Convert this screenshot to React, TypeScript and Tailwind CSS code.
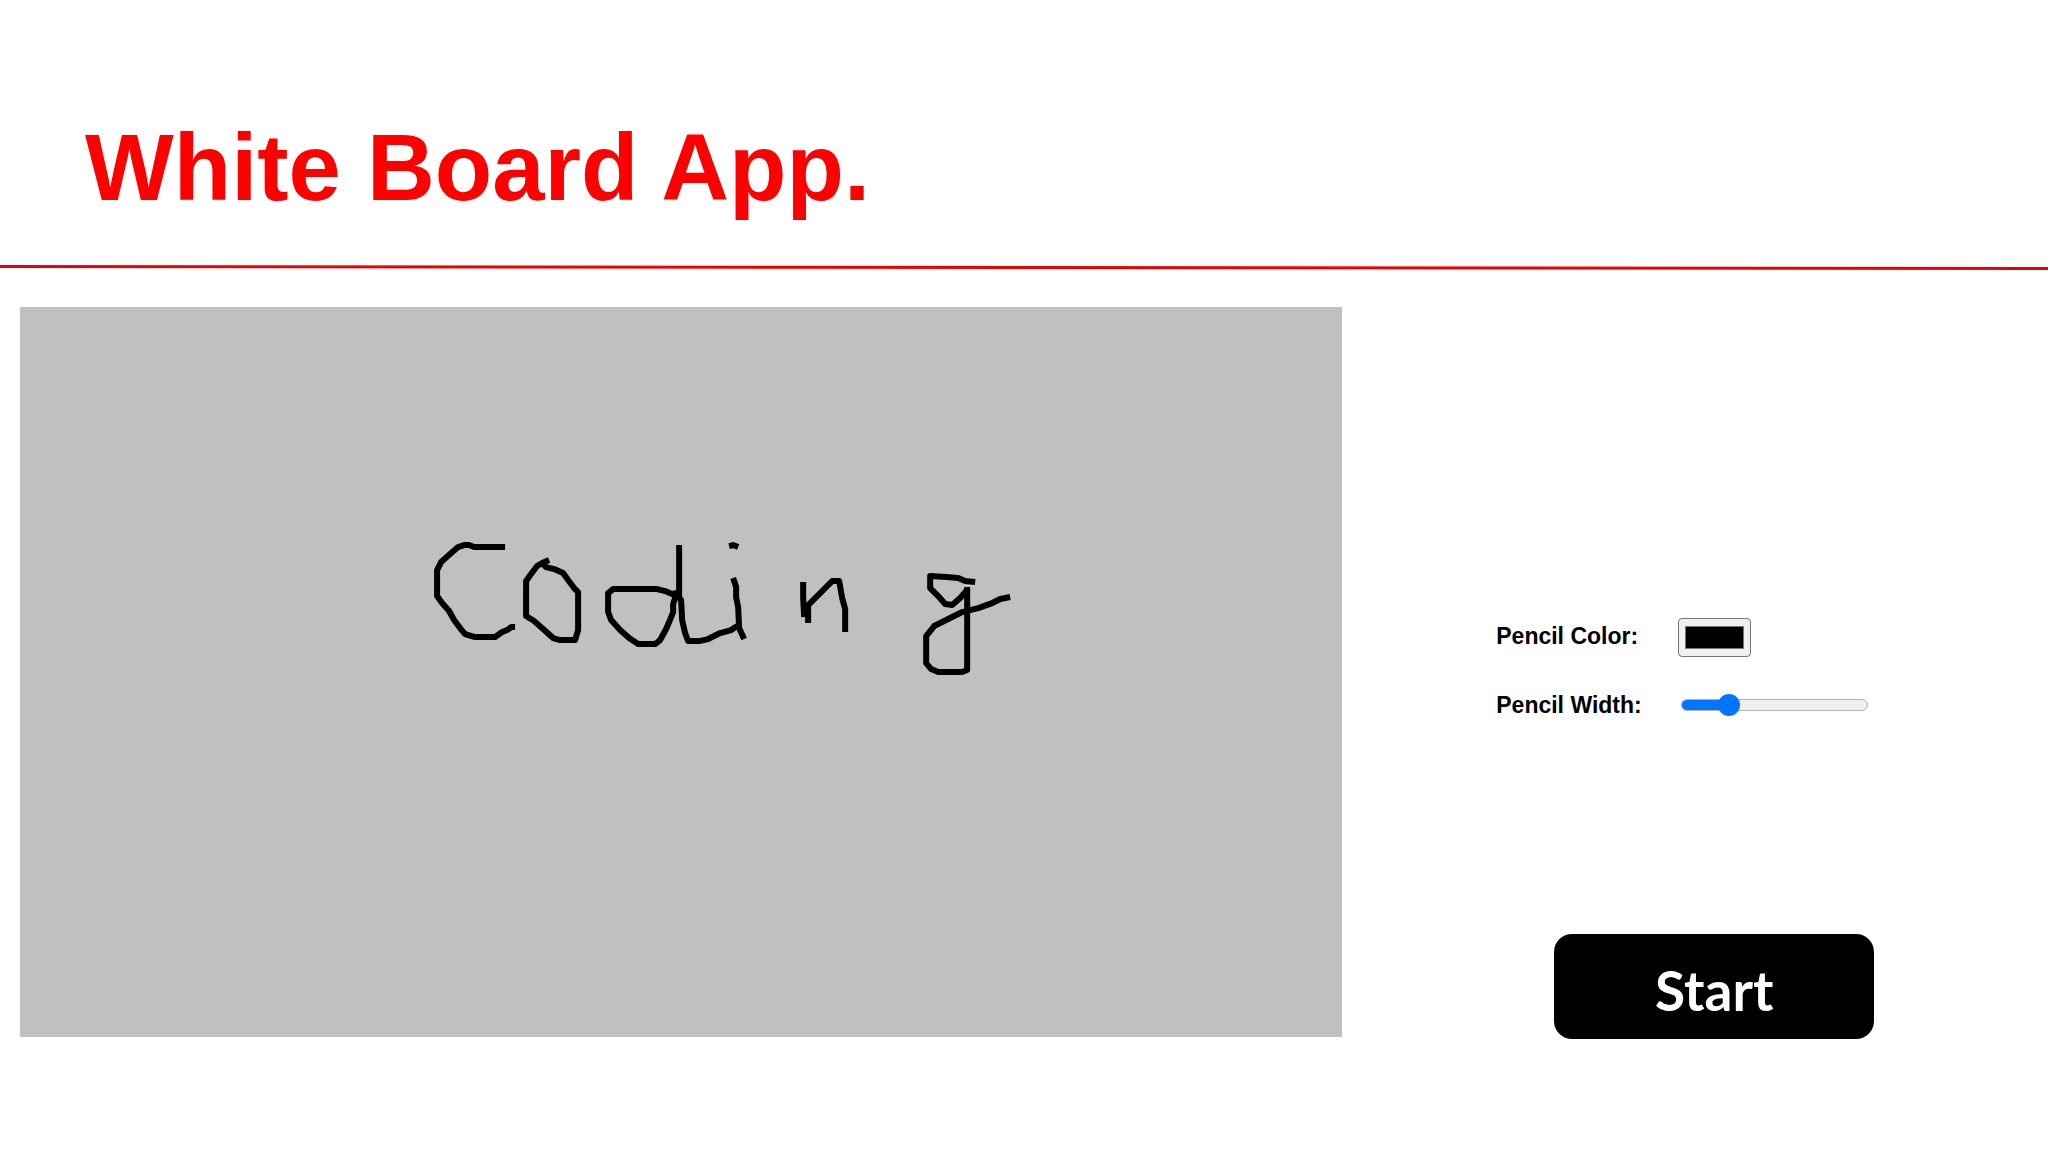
import { useState } from "react";

const MIN_WIDTH = 1;
const MAX_WIDTH = 10;

const strokes = [
  // C
  "485,240 454,240 449,238 444,238 438,240 430,247 421,255 417,263 417,289 422,296 429,304 434,313 440,321 445,327 455,330 475,330 482,325 487,323 491,320 495,320",
  // o
  "529,253 522,256 517,259 511,267 506,274 506,309 514,314 523,322 533,331 540,333 555,333 558,323 558,285 554,281 548,273 543,266 534,262 526,260 523,257",
  // d
  "659,285 652,287 645,284 637,282 593,282 588,286 588,305 591,313 600,323 609,331 618,337 635,337 640,333 646,322 649,315 653,305 653,297 657,285",
  "659,238 659,290 661,293 662,313 665,326 668,334 679,334 688,332 700,326 711,323 717,319",
  // i
  "713,271 716,280 716,290 718,300 719,321 724,332",
  "709,239 713,238 718,240",
  // n
  "783,275 783,290 784,310",
  "788,316 788,298 801,285 812,274 819,274 822,291 825,302 825,325",
  // g
  "955,275 945,274 938,271 926,270 910,269 910,281 918,289 925,297 932,298 940,291 947,283",
  "947,280 947,363 942,365 918,365 911,362 906,356 906,329 914,319 928,312 942,305 958,301 972,296 980,292 990,290",
];

interface BoardProps {
  color: string;
  width: number;
}

function Board({ color, width }: BoardProps) {
  return (
    <svg
      viewBox="0 0 1322 730"
      className="block w-[65.2%] bg-[#c0c0c0]"
      role="img"
      aria-label="White board"
    >
      {strokes.map((points) => (
        <polyline
          key={points}
          points={points}
          fill="none"
          stroke={color}
          strokeWidth={width * 2}
          strokeLinejoin="round"
        />
      ))}
    </svg>
  );
}

export default function App() {
  const [color, setColor] = useState("#000000");
  const [width, setWidth] = useState(3);

  const percent = ((width - MIN_WIDTH) / (MAX_WIDTH - MIN_WIDTH)) * 100;

  return (
    <div className="min-h-screen bg-white font-['Liberation_Sans',Arial,sans-serif] text-black">
      <header className="pt-[121px]">
        <h1 className="px-[85px] text-[94px] leading-none font-bold text-[#ff0000]">
          White Board App.
        </h1>
        <svg
          className="mt-[49px] block h-2 w-full"
          viewBox="0 0 2048 8"
          preserveAspectRatio="none"
          aria-hidden="true"
        >
          <line x1="0" y1="2.5" x2="2048" y2="4.5" stroke="#ee0000" strokeWidth="3" />
        </svg>
      </header>

      <main className="mt-[35px] flex items-start pb-10 pl-5">
        <Board color={color} width={width} />

        <aside className="flex-1 pt-[311px] pl-[154px]">
          <div className="grid grid-cols-[182px_1fr] gap-y-[30px] text-[23px] leading-9 font-bold">
            <label htmlFor="pencil-color">Pencil Color:</label>
            <input
              id="pencil-color"
              type="color"
              value={color}
              onChange={(e) => setColor(e.target.value)}
              className="h-[39px] w-[73px] appearance-none rounded-[4px] border border-[#767676] bg-[#efefef] px-[6px] py-[7px] [&::-webkit-color-swatch]:border [&::-webkit-color-swatch]:border-[#777777] [&::-webkit-color-swatch-wrapper]:p-0"
            />

            <label htmlFor="pencil-width">Pencil Width:</label>
            <input
              id="pencil-width"
              type="range"
              min={MIN_WIDTH}
              max={MAX_WIDTH}
              value={width}
              onChange={(e) => setWidth(Number(e.target.value))}
              style={{
                backgroundImage: `linear-gradient(to right, #0075ff ${percent}%, transparent ${percent}%)`,
              }}
              className="mx-[3px] h-3 w-[187px] appearance-none self-center rounded-full border border-[#b2b2b2] bg-[#efefef] bg-origin-border [&::-webkit-slider-thumb]:size-[22px] [&::-webkit-slider-thumb]:appearance-none [&::-webkit-slider-thumb]:rounded-full [&::-webkit-slider-thumb]:bg-[#0075ff]"
            />
          </div>

          <button
            type="button"
            className="mt-[211px] ml-[58px] block h-[105px] w-80 rounded-[18px] bg-black pt-2 font-[Lato,sans-serif] text-[55px] leading-none font-bold text-white"
          >
            Start
          </button>
        </aside>
      </main>
    </div>
  );
}
